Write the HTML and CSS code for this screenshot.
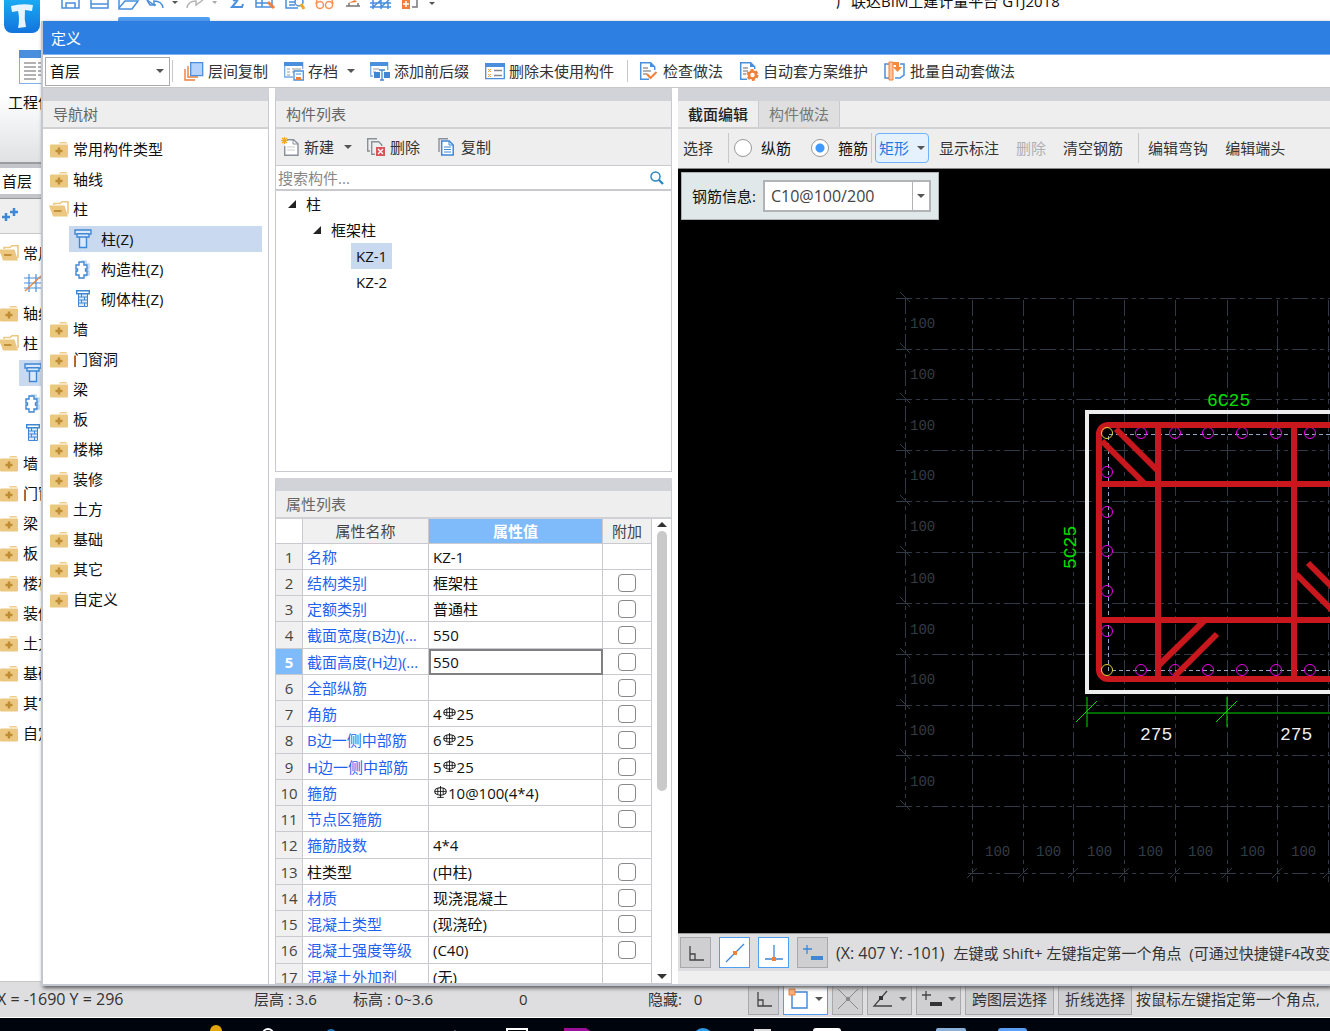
FILE: index.html
```html
<!DOCTYPE html>
<html lang="zh-CN">
<head>
    <meta charset="UTF-8">
    <title>广联达BIM土建计量平台 GTJ2018</title>
    <link rel="stylesheet" href="styles.css">
</head>
<body>
<!-- 图标 -->
<svg class="symbols" aria-hidden="true">
    <symbol id="i-folder" viewBox="0 0 18 18">
        <path d="M9 3.500q0-1.500 2-1.500h4.500q2 0 2 1.500z" fill="#f0cb85"/>
        <rect y="4.500" width="18" height="13" rx="1" fill="#ecc77f"/>
        <path d="M9 7.500v7M5.500 11h7" stroke="#bd8c34" stroke-width="2.400"/>
    </symbol>
    <symbol id="i-open" viewBox="0 0 20 18">
        <path d="M5 5V3.500h6l2-1.800h6V14" fill="none" stroke="#ecc77f" stroke-width="1.600"/>
        <path d="M0 5.500h15.500L19 16.500H4z" fill="#ecc77f"/>
        <path d="M5 11h7.500" stroke="#bd8c34" stroke-width="1.800"/>
    </symbol>
    <symbol id="i-column" viewBox="0 0 18 20">
        <path d="M1 1h16v4h-2v3H3V5H1zM5.500 8v10.500h7V8M3 4.800h12" fill="#dbe9fa" stroke="#3f87d4" stroke-width="1.400"/>
    </symbol>
    <symbol id="i-gz" viewBox="0 0 18 20">
        <path d="M7 2h5v3h3v4h-1v3h1v4h-3v2" fill="none" stroke="#a9cdf2" stroke-width="1.200"/>
        <path d="M5 3h5v3h3v4h-1.500v2H13v4h-3v3H5v-3H2v-4h1.500v-2H2V6h3z" fill="#fff" stroke="#3f87d4" stroke-width="1.400"/>
    </symbol>
    <symbol id="i-brick" viewBox="0 0 18 20">
        <path d="M2.700 1.700h12.600v3H2.700z" fill="#fff" stroke="#3f87d4" stroke-width="1.400"/>
        <path d="M4.500 5h9v12.500h-9zM4.500 8h9M4.500 11h9M4.500 14h9M7.500 5v3M10.500 8v3M7.500 11v3M10.500 14v3" fill="#dbe9fa" stroke="#3f87d4"/>
    </symbol>
    <symbol id="i-axis" viewBox="0 0 18 20">
        <path d="M0 5h18M0 10h18M0 15h18M5 1v18M12 1v18" stroke="#4a8fdd" stroke-width="1.200"/>
        <path d="M1 18L17 3" stroke="#f07f3a" stroke-width="1.200"/>
    </symbol>
    <symbol id="i-rebar" viewBox="0 0 12 12">
        <path d="M6 0v11M3.500 2v6M8.500 2v6M1 5h10M3 10.500h6" stroke="#111" stroke-width=".8" fill="none"/>
        <ellipse cx="6" cy="5" rx="5.300" ry="3.400" fill="none" stroke="#111"/>
    </symbol>
    <symbol id="i-ortho" viewBox="0 0 20 20">
        <path d="M4 3v14h14M4 11h5v6" fill="none" stroke="#444" stroke-width="1.300"/>
    </symbol>
</svg>

<div class="main">
    <header class="quick">
        <svg class="logo" viewBox="0 0 36 34">
            <defs>
                <linearGradient id="lg" x1="0" y1="0" x2="0" y2="1">
                    <stop offset="0" stop-color="#1cb8f8"/>
                    <stop offset="1" stop-color="#1273dd"/>
                </linearGradient>
            </defs>
            <rect y="-8" width="36" height="41" rx="8" fill="url(#lg)"/>
            <path d="M7 6q11-3 22-1l-1 6-7-1q-1 9 1 17l-8 1q2-9 0-17l-6 1z" fill="#e6f4ff"/>
        </svg>
        <svg class="quick-icons" width="385" height="11" viewBox="0 0 385 11" fill="none" stroke="#4a8fdd" stroke-width="1.500">
            <path d="M12 0v8h17V0M16 8V3h9v5"/>
            <path d="M41 0v8h17V0M41 4h17"/>
            <path d="M69 8l6-7h13l-6 8H69V0"/>
            <path d="M97 0l7 5V1q8 0 9 7"/><path d="M97 0l3 5h6"/>
            <path d="M122 1h6l-3 3z" fill="#555" stroke="none"/>
            <g stroke="#b5b5b5"><path d="M153 0l-7 5V1q-8 0-9 7"/><path d="M162 1h5l-2 3z" fill="#aaa" stroke="none"/></g>
            <path d="M183 0l4 1-5 6h10l1-3" stroke-width="2"/>
            <path d="M206 0v7h16V0M206 3h12M212 0v7"/><path d="M218 2l6 6" stroke="#f07f3a" stroke-width="3"/>
            <path d="M236 0v8h12M239 2h6M239 5h6"/><circle cx="249" cy="2" r="4"/><path d="M251 4l3 5" stroke="#f5a623" stroke-width="3"/>
            <g stroke="#f5925a"><circle cx="270" cy="5" r="3.500"/><circle cx="279" cy="5" r="3.500"/><path d="M266 4l1-4M283 4l-1-4"/></g>
            <path d="M296 6h14M299 3v3M308 3v3" stroke="#777"/><path d="M298 3l7-3 2 2z" fill="#f07f3a" stroke="none"/>
            <path d="M320 3h21M320 7h21M323 0v9M331 0v9M338 0v9M323 7l8-7M331 7l8-7"/>
            <rect x="352" y="0" width="8" height="9" fill="#f07f3a" stroke="none"/><path d="M353 4h6M356 1v6" stroke="#fff"/><path d="M362 7h5V0" stroke="#777"/>
            <path d="M379 2h6l-3 3z" fill="#555" stroke="none"/>
        </svg>
        <h1>广联达BIM土建计量平台 GTJ2018</h1>
        <span class="ribbon-tab"></span>
    </header>
    <div class="ribbon">
        <svg width="40" height="44" viewBox="0 0 40 44">
            <rect x=".5" y=".5" width="34" height="33" fill="#fff" stroke="#7fb0ea"/>
            <rect width="35" height="8" fill="#4a8fdd"/>
            <path d="M5 13h12M5 17h12M5 21h12M5 25h12M5 29h12M19 13h9M19 17h9M19 21h9M19 25h9" stroke="#999" stroke-width="1.300"/>
        </svg>
        <span>工程信息</span>
    </div>
    <div class="main-floor">首层</div>
    <div class="main-tools">
        <svg width="16" height="16" viewBox="0 0 16 16"><path d="M4 6v8M0 10h8M12 1v8M8 5h8" stroke="#3f87d4" stroke-width="2.500"/></svg>
    </div>
    <ul class="tree main-tree">
        <li><svg class="open"><use href="#i-open"/></svg>常用构件类型</li>
        <li class="child"><svg><use href="#i-axis"/></svg></li>
        <li><svg><use href="#i-folder"/></svg>轴线</li>
        <li><svg class="open"><use href="#i-open"/></svg>柱</li>
        <li class="child active"><svg><use href="#i-column"/></svg></li>
        <li class="child"><svg><use href="#i-gz"/></svg></li>
        <li class="child"><svg><use href="#i-brick"/></svg></li>
        <li><svg><use href="#i-folder"/></svg>墙</li>
        <li><svg><use href="#i-folder"/></svg>门窗洞</li>
        <li><svg><use href="#i-folder"/></svg>梁</li>
        <li><svg><use href="#i-folder"/></svg>板</li>
        <li><svg><use href="#i-folder"/></svg>楼梯</li>
        <li><svg><use href="#i-folder"/></svg>装修</li>
        <li><svg><use href="#i-folder"/></svg>土方</li>
        <li><svg><use href="#i-folder"/></svg>基础</li>
        <li><svg><use href="#i-folder"/></svg>其它</li>
        <li><svg><use href="#i-folder"/></svg>自定义</li>
    </ul>
    <footer class="status">
        <span class="coords">X = -1690 Y = 296</span>
        <span class="floor-h">层高 : 3.6</span>
        <span class="elev">标高 : 0~3.6</span>
        <span class="count">0</span>
        <span class="hidden-n">隐藏: &nbsp; 0</span>
        <button class="sq"><svg width="20" height="20"><use href="#i-ortho"/></svg></button>
        <button class="sq drop on">
            <svg width="22" height="22" viewBox="0 0 22 22"><path d="M4 4h15v16H4z" fill="none" stroke="#3f87d4" stroke-width="1.400"/><path d="M1 1h6v6H1z" fill="#f8b080" stroke="#f07f3a"/></svg>
            <i class="caret"></i>
        </button>
        <button class="sq"><svg width="20" height="20" viewBox="0 0 20 20"><path d="M0 0l20 20M20 0L0 20" stroke="#888"/><path d="M8 8h4v4H8z" fill="#888"/></svg></button>
        <button class="sq drop">
            <svg width="22" height="20" viewBox="0 0 22 20"><path d="M15 2L2 17h18" fill="none" stroke="#444" stroke-width="1.300"/><path d="M7 7h4v4H7z" fill="#333"/></svg>
            <i class="caret"></i>
        </button>
        <button class="sq drop">
            <svg width="22" height="20" viewBox="0 0 22 20"><path d="M5 2v9M1 6h9" stroke="#444" stroke-width="1.300"/><path d="M9 13h12v4H9z" fill="#333"/></svg>
            <i class="caret"></i>
        </button>
        <button class="sq text">跨图层选择</button>
        <button class="sq text">折线选择</button>
        <span class="tip">按鼠标左键指定第一个角点,</span>
    </footer>
</div>

<div class="taskbar">
    <svg width="1330" height="13">
        <circle cx="216" cy="13" r="6" fill="#e5a50a"/>
        <circle cx="268" cy="16" r="5" fill="none" stroke="#fff" stroke-width="2"/>
        <circle cx="331" cy="16" r="5" fill="#1d72b8"/>
        <path d="M455 13v-1" stroke="#888"/>
        <path d="M507 14v-3h20v3" fill="none" stroke="#fff" stroke-width="2"/>
        <path d="M564 10h22l6 4h-28z" fill="#9b0f9b"/>
        <circle cx="703" cy="20" r="10" fill="#2f9be8"/>
        <path d="M754 11h17v4h-17z" fill="#ddd"/>
        <rect x="813" y="10" width="28" height="8" rx="3" fill="#fff"/>
        <rect x="936" y="10" width="30" height="8" rx="2" fill="#8ab0d8"/>
        <rect x="998" y="10" width="29" height="8" rx="3" fill="#5a9ef5"/>
    </svg>
</div>

<!-- 定义窗口 -->
<div class="dialog">
    <h2 class="title">定义</h2>
    <div class="toolbar">
        <label class="floor"><select aria-label="楼层"><option>首层</option></select><i class="caret"></i></label>
        <i class="sep"></i>
        <button>
            <svg width="20" height="20" viewBox="0 0 20 20"><path d="M1 8v11h10M4 5v11h10" fill="none" stroke="#f07f3a" stroke-width="1.400"/><path d="M6.700 1.700h12v13h-12z" fill="#b5d3fa" stroke="#4a8fdd" stroke-width="1.300"/></svg>
            层间复制
        </button>
        <button>
            <svg width="20" height="20" viewBox="0 0 20 20"><path d="M.7 1v15H9M18.700 1v7" fill="none" stroke="#7aa9e0" stroke-width="1.300"/><path d="M0 1h19v4H0z" fill="#4a8fdd"/><path d="M3 8h3M3 11h3M3 14h3M8 8h9M8 11h2" stroke="#999"/><path d="M10 10h9.300v9H10z" fill="#fff" stroke="#4a8fdd" stroke-width="1.300"/><path d="M12 16h5v3h-5z" fill="#f07f3a"/><path d="M12 13h5" stroke="#4a8fdd"/></svg>
            存档
            <i class="caret"></i>
        </button>
        <button>
            <svg width="20" height="20" viewBox="0 0 20 20"><path d="M.7 1v14H3M17.700 1v8" fill="none" stroke="#7aa9e0" stroke-width="1.300"/><path d="M0 1h18v4H0z" fill="#4a8fdd"/><path d="M3 8h6M3 11h3" stroke="#999"/><path d="M4 11h6v6H4zM14 11h6v6h-6z" fill="#3f87d4"/><path d="M9 9h6M12 9v10M10 19h4" stroke="#3f87d4" stroke-width="1.300"/></svg>
            添加前后缀
        </button>
        <button>
            <svg width="20" height="20" viewBox="0 0 20 20"><path d="M.7 2.700h18.600v15H.7z" fill="#fff" stroke="#4a8fdd" stroke-width="1.300"/><path d="M0 2h20v4H0z" fill="#4a8fdd"/><path d="M3 8l3 3M6 8l-3 3M3 13l3 3M6 13l-3 3" stroke="#f5a04a"/><path d="M9 9.500h8M9 14.500h8" stroke="#888" stroke-width="1.300"/></svg>
            删除未使用构件
        </button>
        <i class="sep"></i>
        <button>
            <svg width="20" height="20" viewBox="0 0 20 20"><path d="M10 18.300H1.700V1.700h10l4 4V9" fill="none" stroke="#4a8fdd" stroke-width="1.500"/><path d="M11 1v5h5z" fill="#4a8fdd"/><path d="M4 7h5M4 10h8M4 13h4" stroke="#999" stroke-width="1.300"/><path d="M8 13l3.500 4 6-6" fill="none" stroke="#f07f3a" stroke-width="2"/></svg>
            检查做法
        </button>
        <button>
            <svg width="20" height="20" viewBox="0 0 20 20"><path d="M8 18.300H1.700V1.700h10l4 4V8" fill="none" stroke="#4a8fdd" stroke-width="1.500"/><path d="M11 1v5h5z" fill="#4a8fdd"/><path d="M4 7h5M4 10h5M4 13h3" stroke="#999" stroke-width="1.300"/><circle cx="13.500" cy="14" r="3.500" fill="#fff" stroke="#f07f3a" stroke-width="2.500"/><circle cx="13.500" cy="14" r="5" fill="none" stroke="#f07f3a" stroke-width="2" stroke-dasharray="3 2.240"/></svg>
            自动套方案维护
        </button>
        <button>
            <svg width="22" height="20" viewBox="0 0 22 20"><path d="M5 3H1v14h4M16 3h4v11l-4 3h-5" fill="none" stroke="#4a8fdd" stroke-width="1.500"/><path d="M5 1h4v18H5z" fill="#fbc49c" stroke="#f07f3a"/><path d="M9 1h6v5h3l-4.500 5L9 6h3V4H9z" fill="#f58a3c"/></svg>
            批量自动套做法
        </button>
    </div>

    <div class="panels">
        <section class="panel nav">
            <h3>导航树</h3>
            <ul class="tree">
                <li><svg><use href="#i-folder"/></svg>常用构件类型</li>
                <li><svg><use href="#i-folder"/></svg>轴线</li>
                <li><svg class="open"><use href="#i-open"/></svg>柱</li>
                <li class="child active"><svg><use href="#i-column"/></svg>柱(Z)</li>
                <li class="child"><svg><use href="#i-gz"/></svg>构造柱(Z)</li>
                <li class="child"><svg><use href="#i-brick"/></svg>砌体柱(Z)</li>
                <li><svg><use href="#i-folder"/></svg>墙</li>
                <li><svg><use href="#i-folder"/></svg>门窗洞</li>
                <li><svg><use href="#i-folder"/></svg>梁</li>
                <li><svg><use href="#i-folder"/></svg>板</li>
                <li><svg><use href="#i-folder"/></svg>楼梯</li>
                <li><svg><use href="#i-folder"/></svg>装修</li>
                <li><svg><use href="#i-folder"/></svg>土方</li>
                <li><svg><use href="#i-folder"/></svg>基础</li>
                <li><svg><use href="#i-folder"/></svg>其它</li>
                <li><svg><use href="#i-folder"/></svg>自定义</li>
            </ul>
        </section>

        <div class="middle">
            <section class="panel list">
                <h3>构件列表</h3>
                <div class="list-tools">
                    <button>
                        <svg width="18" height="20" viewBox="0 0 18 20"><path d="M6 2.700h6.500l4.500 4v11.600H3.700V9" fill="#fff" stroke="#8a9099" stroke-width="1.400"/><path d="M12 3v4h5" fill="none" stroke="#8a9099"/><path d="M6 10h8M6 13h8" stroke="#ccc"/><path d="M3.500 0v7M0 3.500h7M1 1l5 5M6 1L1 6" stroke="#f5a623" stroke-width="1.200"/></svg>
                        新建
                        <i class="caret"></i>
                    </button>
                    <button>
                        <svg width="18" height="20" viewBox="0 0 18 20"><path d="M3 14H.7V1.700H10M8 17.300H4.700V4.700h7l3 3V9" fill="none" stroke="#8a9099" stroke-width="1.400"/><path d="M9 10h9v9H9z" fill="#d9545a"/><path d="M11 12l5 5M16 12l-5 5" stroke="#fff" stroke-width="1.200"/></svg>
                        删除
                    </button>
                    <button>
                        <svg width="18" height="20" viewBox="0 0 18 20"><path d="M1 15V1.700h9" fill="none" stroke="#8a9099" stroke-width="1.400"/><path d="M3.700 4h7.500l4 4v10H3.700z" fill="#fff" stroke="#3f87d4" stroke-width="1.500"/><path d="M11 4v4h4M6 10h7M6 12.500h7M6 15h7" fill="none" stroke="#3f87d4"/></svg>
                        复制
                    </button>
                </div>
                <div class="search">
                    <input type="text" placeholder="搜索构件..." aria-label="搜索构件">
                    <svg width="14" height="14" viewBox="0 0 14 14"><circle cx="5.500" cy="5.500" r="4.500" fill="none" stroke="#2f88c0" stroke-width="1.500"/><path d="M9 9l4 4" stroke="#2f88c0" stroke-width="2.400"/></svg>
                </div>
                <ul class="outline">
                    <li class="l1"><i class="tri"></i>柱</li>
                    <li class="l2"><i class="tri"></i>框架柱</li>
                    <li class="l3"><span class="active">KZ-1</span></li>
                    <li class="l3"><span>KZ-2</span></li>
                </ul>
            </section>

            <section class="panel props">
                <h3>属性列表</h3>
                <div class="props-body">
                    <table>
                        <thead>
                        <tr><th></th><th>属性名称</th><th class="cur">属性值</th><th>附加</th></tr>
                        </thead>
                        <tbody>
                        <tr><th>1</th><td>名称</td><td>KZ-1</td><td></td></tr>
                        <tr><th>2</th><td>结构类别</td><td>框架柱</td><td><input type="checkbox" aria-label="附加"></td></tr>
                        <tr><th>3</th><td>定额类别</td><td>普通柱</td><td><input type="checkbox" aria-label="附加"></td></tr>
                        <tr><th>4</th><td>截面宽度(B边)(...</td><td>550</td><td><input type="checkbox" aria-label="附加"></td></tr>
                        <tr class="cur"><th>5</th><td>截面高度(H边)(...</td><td>550</td><td><input type="checkbox" aria-label="附加"></td></tr>
                        <tr><th>6</th><td>全部纵筋</td><td></td><td><input type="checkbox" aria-label="附加"></td></tr>
                        <tr><th>7</th><td>角筋</td><td>4<svg><use href="#i-rebar"/></svg>25</td><td><input type="checkbox" aria-label="附加"></td></tr>
                        <tr><th>8</th><td>B边一侧中部筋</td><td>6<svg><use href="#i-rebar"/></svg>25</td><td><input type="checkbox" aria-label="附加"></td></tr>
                        <tr><th>9</th><td>H边一侧中部筋</td><td>5<svg><use href="#i-rebar"/></svg>25</td><td><input type="checkbox" aria-label="附加"></td></tr>
                        <tr><th>10</th><td>箍筋</td><td><svg><use href="#i-rebar"/></svg>10@100(4*4)</td><td><input type="checkbox" aria-label="附加"></td></tr>
                        <tr><th>11</th><td>节点区箍筋</td><td></td><td><input type="checkbox" aria-label="附加"></td></tr>
                        <tr><th>12</th><td>箍筋肢数</td><td>4*4</td><td></td></tr>
                        <tr><th>13</th><td class="plain">柱类型</td><td>(中柱)</td><td><input type="checkbox" aria-label="附加"></td></tr>
                        <tr><th>14</th><td>材质</td><td>现浇混凝土</td><td><input type="checkbox" aria-label="附加"></td></tr>
                        <tr><th>15</th><td>混凝土类型</td><td>(现浇砼)</td><td><input type="checkbox" aria-label="附加"></td></tr>
                        <tr><th>16</th><td>混凝土强度等级</td><td>(C40)</td><td><input type="checkbox" aria-label="附加"></td></tr>
                        <tr><th>17</th><td>混凝土外加剂</td><td>(无)</td><td></td></tr>
                        </tbody>
                    </table>
                    <div class="scroll"><i class="up"></i><i class="thumb"></i><i class="down"></i></div>
                </div>
            </section>
        </div>

        <section class="panel editor">
            <div class="tabs">
                <button class="active">截面编辑</button>
                <button>构件做法</button>
            </div>
            <div class="edit-tools">
                <button>选择</button>
                <i class="sep"></i>
                <label><input type="radio" name="bar">纵筋</label>
                <label><input type="radio" name="bar" checked>箍筋</label>
                <i class="sep"></i>
                <button class="shape">矩形<i class="caret"></i></button>
                <button>显示标注</button>
                <button disabled>删除</button>
                <button>清空钢筋</button>
                <i class="sep"></i>
                <button>编辑弯钩</button>
                <button>编辑端头</button>
            </div>
            <div class="canvas">
                <svg width="100%" height="100%">
                    <g transform="translate(-678 -169)">
                        <g class="grid">
                            <path d="M896 298H1400M896 349H1400M896 399H1400M896 450H1400M896 501H1400M896 552H1400M896 603H1400M896 654H1400M896 705H1400M896 755H1400M896 806H1400"/>
                            <path d="M972 300V882M1023 300V882M1073 300V882M1124 300V882M1175 300V882M1227 300V882M1277 300V882M1328 300V882"/>
                            <path d="M905 298V806M968 873H1400"/>
                        </g>
                        <path class="ticks" d="M900 292l10 10M900 343l10 10M900 393l10 10M900 444l10 10M900 495l10 10M900 546l10 10M900 597l10 10M900 648l10 10M900 699l10 10M900 749l10 10M900 800l10 10M967 878l10-10M1018 878l10-10M1068 878l10-10M1119 878l10-10M1170 878l10-10M1222 878l10-10M1272 878l10-10M1323 878l10-10"/>
                        <g class="dim">
                            <text x="910" y="328">100</text><text x="910" y="379">100</text><text x="910" y="430">100</text><text x="910" y="480">100</text><text x="910" y="531">100</text><text x="910" y="583">100</text><text x="910" y="634">100</text><text x="910" y="684">100</text><text x="910" y="735">100</text><text x="910" y="786">100</text>
                            <text x="985" y="856">100</text><text x="1036" y="856">100</text><text x="1087" y="856">100</text><text x="1138" y="856">100</text><text x="1188" y="856">100</text><text x="1240" y="856">100</text><text x="1291" y="856">100</text>
                        </g>
                        <rect class="outline-rect" x="1087" y="412" width="280" height="280"/>
                        <path class="axis" d="M1400 434H1108V670H1400"/>
                        <g class="bars">
                            <circle cx="1141" cy="433" r="5.500"/><circle cx="1175" cy="433" r="5.500"/><circle cx="1208" cy="433" r="5.500"/><circle cx="1242" cy="433" r="5.500"/><circle cx="1276" cy="433" r="5.500"/><circle cx="1310" cy="433" r="5.500"/>
                            <circle cx="1107" cy="472" r="5.500"/><circle cx="1107" cy="512" r="5.500"/><circle cx="1107" cy="551" r="5.500"/><circle cx="1107" cy="591" r="5.500"/><circle cx="1107" cy="631" r="5.500"/>
                            <circle cx="1141" cy="670" r="5.500"/><circle cx="1175" cy="670" r="5.500"/><circle cx="1208" cy="670" r="5.500"/><circle cx="1242" cy="670" r="5.500"/><circle cx="1276" cy="670" r="5.500"/><circle cx="1310" cy="670" r="5.500"/>
                        </g>
                        <g class="stirrup">
                            <rect x="1099" y="425" width="256" height="254" rx="9"/>
                            <path d="M1158 427V677M1294 427V677M1101 484H1353M1101 620H1353"/>
                            <path d="M1102 441l42 42M1116 429l42 42M1158 666l46-45M1175 676l42-42M1296 574l60 60M1308 563l50 50"/>
                        </g>
                        <g class="bars">
                            <circle class="corner" cx="1107" cy="433" r="5.500"/><circle class="corner" cx="1107" cy="670" r="5.500"/>
                        </g>
                        <path class="measure" d="M1087 713H1400M1087 697v30M1227 697v30M1076 722l21-21M1216 722l21-21"/>
                        <text class="green" x="1207" y="406">6C25</text>
                        <text class="green" transform="translate(1076 569) rotate(-90)">5C25</text>
                        <text class="white" x="1140" y="740">275</text>
                        <text class="white" x="1280" y="740">275</text>
                    </g>
                </svg>
                <div class="info">
                    <label for="rebar">钢筋信息:</label>
                    <span class="combo"><input id="rebar" type="text" value="C10@100/200"><button aria-label="展开"><i class="caret"></i></button></span>
                </div>
            </div>
            <div class="edit-status">
                <button class="sq"><svg width="20" height="20"><use href="#i-ortho"/></svg></button>
                <button class="sq on"><svg width="20" height="20" viewBox="0 0 20 20"><path d="M1 19L19 1" stroke="#3f87d4" stroke-width="1.300"/><path d="M8 8h4v4H8z" fill="#f07f3a"/></svg></button>
                <button class="sq on"><svg width="20" height="20" viewBox="0 0 20 20"><path d="M10 2v14M1 16h18" stroke="#3f87d4" stroke-width="1.300"/><path d="M8 14h4v4H8z" fill="#f07f3a"/></svg></button>
                <button class="sq"><svg width="22" height="20" viewBox="0 0 22 20"><path d="M5 2v9M1 6h9" stroke="#3f87d4" stroke-width="1.300"/><path d="M9 13h12v4H9z" fill="#3f87d4"/></svg></button>
                <span class="xy">(X: 407 Y: -101)</span>
                <span>左键或 Shift+ 左键指定第一个角点&nbsp; (可通过快捷键F4改变插入点)</span>
            </div>
        </section>
    </div>
</div>
</body>
</html>
```

FILE: styles.css
```css
* {
    margin: 0;
    padding: 0;
    box-sizing: border-box;
}

body {
    display: flex;
    flex-direction: column;
    position: relative;
    height: 100vh;
    overflow: hidden;
    background: #fff;
    color: #111;
    font: 15px/20px "Open Sans", "Noto Sans CJK SC", sans-serif;
}

ul {
    list-style: none;
}

button, input, select {
    font: inherit;
    color: inherit;
    border: 0;
    background: none;
    outline: none;
}

svg {
    flex: none;
}

.symbols {
    position: absolute;
    width: 0;
    height: 0;
}

.caret {
    flex: none;
    width: 0;
    height: 0;
    border: 4px solid transparent;
    border-top-color: #555;
    border-bottom-width: 0;
}

.sep {
    flex: none;
    width: 1px;
    height: 22px;
    background: #c8c8c8;
}

/* 主窗口 */
.main {
    flex: 1;
    display: flex;
    flex-direction: column;
    min-height: 0;
    overflow: hidden;
}

.quick {
    position: relative;
    display: flex;
    align-items: flex-start;
    height: 50px;
}

.logo {
    width: 36px;
    height: 34px;
    margin-left: 4px;
}

.quick-icons {
    margin-left: 10px;
}

.quick h1 {
    margin: -9px 0 0 401px;
    font-size: 15px;
    font-weight: normal;
    white-space: nowrap;
}

.ribbon-tab {
    position: absolute;
    left: 118px;
    top: 17px;
    width: 92px;
    height: 20px;
    border-radius: 2px;
    background: #4f9ff5;
}

.ribbon {
    display: flex;
    flex-direction: column;
    height: 114px;
    border-bottom: 2px solid #9a9ca1;
    background: linear-gradient(#fff 40%, #dfe1e3);
    white-space: nowrap;
}

.ribbon svg {
    margin-left: 19px;
}

.ribbon span {
    margin: -2px 0 0 8px;
}

.main-floor {
    height: 34px;
    border: solid #c3c5ca;
    border-width: 4px 0;
    line-height: 26px;
    padding-left: 2px;
}

.main-tools {
    height: 36px;
    padding: 8px 2px;
    background: #efefef;
    border-top: 1px solid #999;
    border-bottom: 1px solid #c8c8c8;
}

.tree {
    display: flex;
    flex-direction: column;
}

.tree li {
    flex: none;
    display: flex;
    align-items: center;
    height: 30px;
    padding-left: 7px;
    white-space: nowrap;
}

.tree svg {
    width: 18px;
    height: 18px;
    margin-right: 5px;
}

.tree svg.open {
    width: 20px;
    margin: 0 4px 0 -1px;
}

.tree .child {
    height: 26px;
    margin: 2px 6px 2px 26px;
    padding-left: 5px;
}

.tree .child svg {
    height: 20px;
    margin-right: 9px;
}

.tree .active {
    background: #c9daf0;
}

.main-tree {
    flex: 1;
    padding-top: 4px;
}

.main-tree li {
    padding-left: 0;
}

.main-tree .child {
    margin-left: 19px;
}

.status {
    display: flex;
    align-items: center;
    height: 37px;
    padding-bottom: 1px;
    background: #dedee0;
    border-top: 1px solid #c8c8c8;
    border-bottom: 1px solid #fff;
    color: #333;
    white-space: nowrap;
}

.status span {
    flex: none;
}

.coords {
    width: 254px;
    font-size: 16px;
    text-indent: -3px;
}

.floor-h {
    width: 99px;
}

.elev {
    width: 166px;
}

.count {
    width: 129px;
}

.hidden-n {
    width: 100px;
}

.sq {
    flex: none;
    display: flex;
    align-items: center;
    justify-content: center;
    width: 31px;
    height: 31px;
    margin-right: 4px;
    border: 1px solid #a9a9ab;
    background: #cfcfd1;
}

.sq.drop {
    justify-content: space-between;
    width: 45px;
    padding: 0 4px;
}

.sq.on {
    border-color: #4f9ff5;
    background: #fff;
}

.sq.text {
    width: auto;
    padding: 0 6px;
}

.taskbar {
    height: 13px;
    overflow: hidden;
    background: #00040c;
}

.taskbar svg {
    display: block;
}

/* 定义窗口 */
.dialog {
    position: absolute;
    top: 21px;
    left: 41px;
    right: 0;
    bottom: 45px;
    display: flex;
    flex-direction: column;
    overflow: hidden;
    border: solid #c3c7cf;
    border-width: 0 0 2px 2px;
    background: #fff;
    box-shadow: 2px 2px 4px #555;
}

.title {
    height: 34px;
    padding-left: 8px;
    background: #2d7fe1;
    border-bottom: 1px solid #7fb3f0;
    color: #fff;
    font-size: 15px;
    font-weight: normal;
    line-height: 34px;
}

.toolbar {
    display: flex;
    align-items: center;
    height: 33px;
    padding-left: 2px;
    border-bottom: 1px solid #c8c9cc;
    color: #333;
}

.toolbar .sep {
    margin: 0 3px 0 2px;
}

.toolbar button {
    flex: none;
    display: flex;
    align-items: center;
    gap: 4px;
    padding: 0 8px;
    white-space: nowrap;
}

.toolbar button + .sep {
    margin-left: 5px;
}

.toolbar button .caret {
    margin-left: 5px;
    margin-right: -1px;
}

.floor {
    display: flex;
    align-items: center;
    width: 125px;
    height: 29px;
    padding: 0 5px 0 4px;
    border: 1px solid #aaa;
    color: #111;
}

.floor select {
    flex: 1;
    appearance: none;
}

.panels {
    flex: 1;
    display: flex;
    gap: 6px;
    min-height: 0;
}

.panel {
    display: flex;
    flex-direction: column;
    border-top: 13px solid #d2d3d8;
}

.panel h3 {
    height: 28px;
    padding-left: 10px;
    border-bottom: 2px solid #d0d1d4;
    background: #eee;
    color: #666;
    font-size: 15px;
    font-weight: normal;
    line-height: 26px;
}

.nav {
    width: 226px;
    border-right: 1px solid #c8cacf;
}

.nav .tree {
    padding-top: 5px;
}

.middle {
    display: flex;
    flex-direction: column;
    gap: 6px;
    width: 397px;
    min-height: 0;
}

.middle .panel {
    border: 1px solid #c8cacf;
    border-top: 13px solid #d2d3d8;
}

.list {
    flex: none;
    height: 384px;
}

.list-tools {
    display: flex;
    gap: 18px;
    height: 37px;
    padding: 0 0 1px 5px;
    border-bottom: 1px solid #c8cacf;
    background: #eee;
    color: #333;
}

.list-tools button {
    display: flex;
    align-items: center;
    gap: 5px;
}

.list-tools .caret {
    margin-left: 5px;
    margin-right: -3px;
}

.search {
    display: flex;
    align-items: center;
    height: 25px;
    padding: 0 7px 0 2px;
    border-bottom: 2px solid #c8cacf;
}

.search input {
    flex: 1;
}

.search input::placeholder {
    color: #888;
}

.outline li {
    display: flex;
    align-items: center;
    height: 26px;
}

.outline .l1 {
    padding-left: 12px;
}

.outline .l2 {
    padding-left: 37px;
}

.outline .l3 {
    padding-left: 75px;
}

.outline span {
    padding: 0 5px;
    line-height: 26px;
}

.outline .active {
    background: #c9daf0;
}

.tri {
    width: 0;
    height: 0;
    margin-right: 10px;
    border-left: 8px solid transparent;
    border-bottom: 8px solid #222;
}

.props {
    flex: 1;
    min-height: 0;
}

.props-body {
    flex: 1;
    display: flex;
    min-height: 0;
    overflow: hidden;
}

.props table {
    width: 376px;
    table-layout: fixed;
    border-collapse: separate;
    border-spacing: 0;
}

.props tr {
    height: 26px;
}

.props thead tr {
    height: 25px;
}

.props tbody tr:nth-child(4n) {
    height: 27px;
}

.props th, .props td {
    border: solid #c8cacf;
    border-width: 0 1px 1px 0;
    font-weight: normal;
    line-height: 20px;
    white-space: nowrap;
}

.props th {
    background: #f0f0f0;
    color: #444;
}

.props th:nth-child(1) {
    width: 27px;
}

.props th:nth-child(2) {
    width: 126px;
}

.props th:nth-child(3) {
    width: 174px;
}

.props thead th:first-child {
    background: #fff;
}

.props thead .cur {
    background: #7fbafa;
    color: #fff;
    font-weight: bold;
}

.props td {
    padding-left: 4px;
}

.props td:nth-child(2) {
    color: #1e62f0;
}

.props td.plain {
    color: #111;
}

.props td:nth-child(4) {
    padding: 0;
    text-align: center;
}

.props tr.cur th {
    background: #7fbafa;
    color: #fff;
    font-weight: bold;
}

.props tr.cur td:nth-child(3) {
    outline: 2px solid #808080;
    outline-offset: -2px;
}

.props td svg {
    width: 13px;
    height: 13px;
    margin: 0 1px;
    vertical-align: 0;
}

.props input {
    appearance: none;
    display: block;
    width: 18px;
    height: 18px;
    margin: 0 auto;
    border: 1px solid #888;
    border-radius: 4px;
    background: #fff;
}

.scroll {
    flex: 1;
    display: flex;
    flex-direction: column;
    align-items: center;
    padding: 3px 0 4px;
}

.up, .down {
    border: 5px solid transparent;
}

.up {
    border-top: 0;
    border-bottom-color: #333;
}

.down {
    margin-top: auto;
    border-bottom: 0;
    border-top-color: #333;
}

.thumb {
    width: 10px;
    height: 57%;
    margin-top: 4px;
    border-radius: 5px;
    background: #c9c9c9;
}

.editor {
    flex: 1;
    min-width: 0;
}

.tabs {
    display: flex;
    height: 28px;
    border-bottom: 2px solid #d0d1d4;
    background: #eee;
}

.tabs button {
    padding: 0 10px;
    border-right: 1px solid #c8cacf;
    background: #dfdfdf;
    color: #777;
}

.tabs .active {
    background: #eee;
    color: #222;
    font-weight: 500;
}

.edit-tools {
    display: flex;
    flex: none;
    align-items: center;
    height: 40px;
    padding: 0 0 2px 5px;
    border-bottom: 1px solid #888;
    background: #eee;
    color: #333;
    white-space: nowrap;
}

.edit-tools button {
    margin-right: 17px;
}

.edit-tools button:disabled {
    color: #b0b0b0;
}

.edit-tools .sep {
    height: 30px;
    margin: 0 9px 0 -2px;
}

.edit-tools label {
    display: flex;
    align-items: center;
    gap: 9px;
    margin: 0 15px 0 -4px;
    color: #111;
}

.edit-tools label + label {
    margin: 0 5px;
}

.edit-tools input {
    appearance: none;
    width: 18px;
    height: 18px;
    border: 1px solid #999;
    border-radius: 50%;
    background: #fff;
}

.edit-tools input:checked {
    background: radial-gradient(#3f98fb 4px, #fff 5px);
}

.edit-tools label + .sep {
    margin: 0 3px 0 -2px;
}

.edit-tools .shape {
    display: flex;
    align-items: center;
    gap: 8px;
    height: 30px;
    margin-right: 10px;
    padding: 0 3px;
    border: 1px solid #6fb2fa;
    border-radius: 4px;
    background: #e5f1fd;
    color: #1e78e0;
}

.canvas {
    flex: 1;
    position: relative;
    min-height: 0;
    overflow: hidden;
    background: #000;
}

.canvas svg {
    display: block;
    fill: none;
}

.grid {
    stroke: #303a46;
    stroke-dasharray: 16 4 4 4 4 4;
    shape-rendering: crispEdges;
}

.ticks {
    stroke: #303a46;
}

.canvas text {
    font-family: "Liberation Mono", monospace;
    font-size: 18px;
}

.canvas .dim text {
    fill: #343c46;
    font-size: 14px;
}

.canvas .green {
    fill: #00e000;
}

.canvas .white {
    fill: #eee;
}

.outline-rect {
    stroke: #eee;
    stroke-width: 4;
}

.axis {
    stroke: #8fa8c8;
    stroke-dasharray: 4 3;
    shape-rendering: crispEdges;
}

.bars {
    stroke: #f000f0;
    stroke-width: 1;
}

.bars .corner {
    stroke: #e0d040;
}

.stirrup {
    stroke: #c9171e;
    stroke-width: 6;
}

.measure {
    stroke: #00d800;
}

.info {
    position: absolute;
    left: 3px;
    top: 3px;
    display: flex;
    align-items: center;
    gap: 7px;
    height: 48px;
    padding: 0 7px 0 10px;
    border: 1px solid #aab2b4;
    background: #e0e8ea;
}

.combo {
    display: flex;
    width: 168px;
    height: 32px;
    border: 2px solid #b0b4b6;
    background: #fff;
    color: #444;
    font-size: 16px;
}

.combo input {
    flex: 1;
    min-width: 0;
    padding-left: 6px;
}

.combo button {
    width: 17px;
    padding-left: 4px;
    border-left: 1px solid #b0b4b6;
}

.combo .caret {
    display: block;
}

.edit-status {
    display: flex;
    flex: none;
    align-items: center;
    height: 51px;
    padding: 0 0 13px 2px;
    border-top: 1px solid #999;
    background: linear-gradient(#dedee0 37px, #efefef 37px);
    color: #333;
    white-space: nowrap;
}

.edit-status .sq {
    margin-right: 8px;
}

.xy {
    margin-right: 9px;
    font-size: 16px;
}
```
